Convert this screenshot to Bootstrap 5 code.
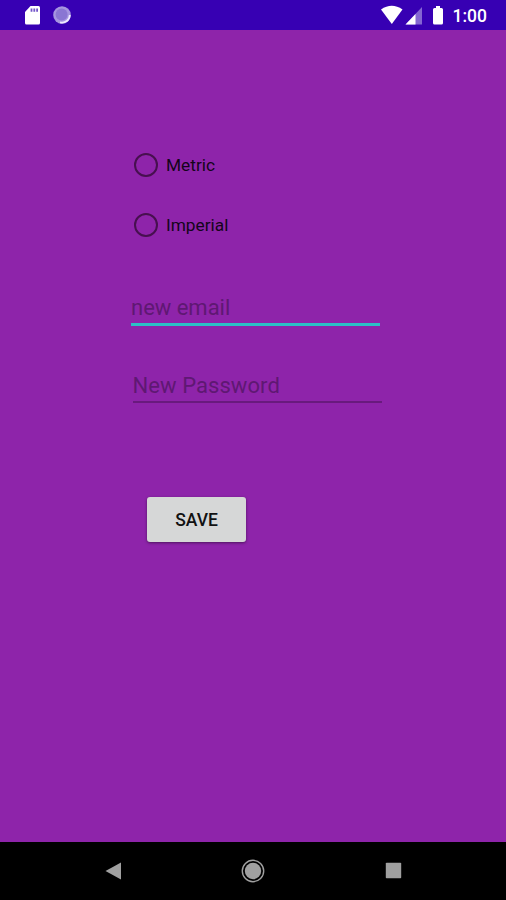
<!DOCTYPE html>
<html lang="en">
<head>
<meta charset="utf-8">
<meta name="viewport" content="width=device-width, initial-scale=1">
<title>Settings</title>
<link href="https://cdn.jsdelivr.net/npm/bootstrap@5.3.0/dist/css/bootstrap.min.css" rel="stylesheet">
<style>
body{font-family:Roboto,"Liberation Sans",sans-serif;background:#8e24aa;height:900px;overflow:hidden}
svg{display:block;flex:none}
.status{height:30px;background:#3700b3;padding:0 18.5px 0 24px}
.notice{margin-left:12px}
.clock{font-size:17.5px;font-weight:500;line-height:30px;width:35px;margin-left:8px;padding-top:2px}
.settings{padding:120px 0 0 131px}
.form-check.option{min-height:30px;height:30px;margin:0 0 30px;padding:0 0 0 2.5px}
.option .form-check-input{width:24.5px;height:24.5px;margin:0 8px 0 0;float:none;border:2px solid #47104f;background-color:transparent}
.option .form-check-label{font-size:17.3px;line-height:30px;color:#14041a}
.form-control.line{width:249px;height:36px;padding:2px 0 0;border:0;border-radius:0;background:transparent;font-size:22px;line-height:30px;box-shadow:none}
.form-control.line::placeholder{color:#5f1873;opacity:1}
.form-control.email{margin-top:-4px;border-bottom:3px solid #2bc0c6;letter-spacing:-.02px}
.form-control.line.pass{margin:41px 0 0 1.5px;padding-top:3px;border-bottom:2px solid #691a7e;letter-spacing:.07px}
.btn.save{width:99px;height:45px;margin:94px 0 0 16px;padding:0;border:0;border-radius:3px;background:#d6d7d7;color:#111;font-size:17.5px;font-weight:500;line-height:47px;box-shadow:0 1px 3px rgba(0,0,0,.45)}
.navkeys{height:58.5px;background:#000;padding:0 104.5px 0 104.5px}
</style>
<script src="https://cdn.jsdelivr.net/npm/bootstrap@5.3.0/dist/js/bootstrap.bundle.min.js"></script>
</head>
<body class="d-flex flex-column">
<header class="status d-flex align-items-center text-white flex-shrink-0">
  <svg width="17" height="30"><path d="M6.500 6H14.500Q16 6 16 7.500V23Q16 24.500 14.500 24.500H2.500Q1 24.500 1 23V12Z" fill="#fff"/><path d="M7.500 8.500v3.300M10.300 8.500v3.300M13.100 8.500v3.300" stroke="#7354c9" stroke-width="1.800"/></svg>
  <svg class="notice" width="20" height="30"><circle cx="9" cy="15" r="8.800" fill="#a695e0"/><circle cx="8.600" cy="14.600" r="6" fill="#8a76d3"/><path d="M16.800 15A7.700 7.700 0 0 1 7 22.300" fill="none" stroke="#eeeaff" stroke-width="1.800"/></svg>
  <svg class="ms-auto" width="65" height="30"><path d="M1 9.500Q11.800 2 22.500 9.500L11.800 24Z" fill="#fff"/><path d="M42 7V24.500H25.500Z" fill="#8466d2"/><path d="M35.500 14V24.500H25.500Z" fill="#fff"/><path d="M56 6h4v2h1.500q1.500 0 1.500 1.500V23q0 1.500-1.500 1.500h-7Q53 24.500 53 23V9.500Q53 8 54.500 8h1.500Z" fill="#fff"/></svg>
  <span class="clock">1:00</span>
</header>
<main class="flex-grow-1">
  <form class="settings">
    <div class="form-check option d-flex align-items-center">
      <input class="form-check-input" type="radio" name="units" id="metric"><label class="form-check-label" for="metric">Metric</label>
    </div>
    <div class="form-check option d-flex align-items-center">
      <input class="form-check-input" type="radio" name="units" id="imperial"><label class="form-check-label" for="imperial">Imperial</label>
    </div>
    <div class="pt-4"></div>
    <input class="form-control line email" type="email" placeholder="new email" aria-label="new email">
    <input class="form-control line pass" type="password" placeholder="New Password" aria-label="New Password">
    <button class="btn save" type="button">SAVE</button>
  </form>
</main>
<footer class="navkeys d-flex align-items-center justify-content-between flex-shrink-0">
  <svg width="17" height="18"><path d="M.5 9L16 .5V17.500Z" fill="#a0a0a0"/></svg>
  <svg width="24" height="24"><circle cx="12" cy="12" r="10.700" fill="none" stroke="#a0a0a0" stroke-width="1.400"/><circle cx="12" cy="12" r="8.200" fill="#a0a0a0"/></svg>
  <svg width="17" height="17"><rect x=".8" y=".8" width="15.400" height="15.400" rx=".8" fill="#a0a0a0"/></svg>
</footer>
</body>
</html>
